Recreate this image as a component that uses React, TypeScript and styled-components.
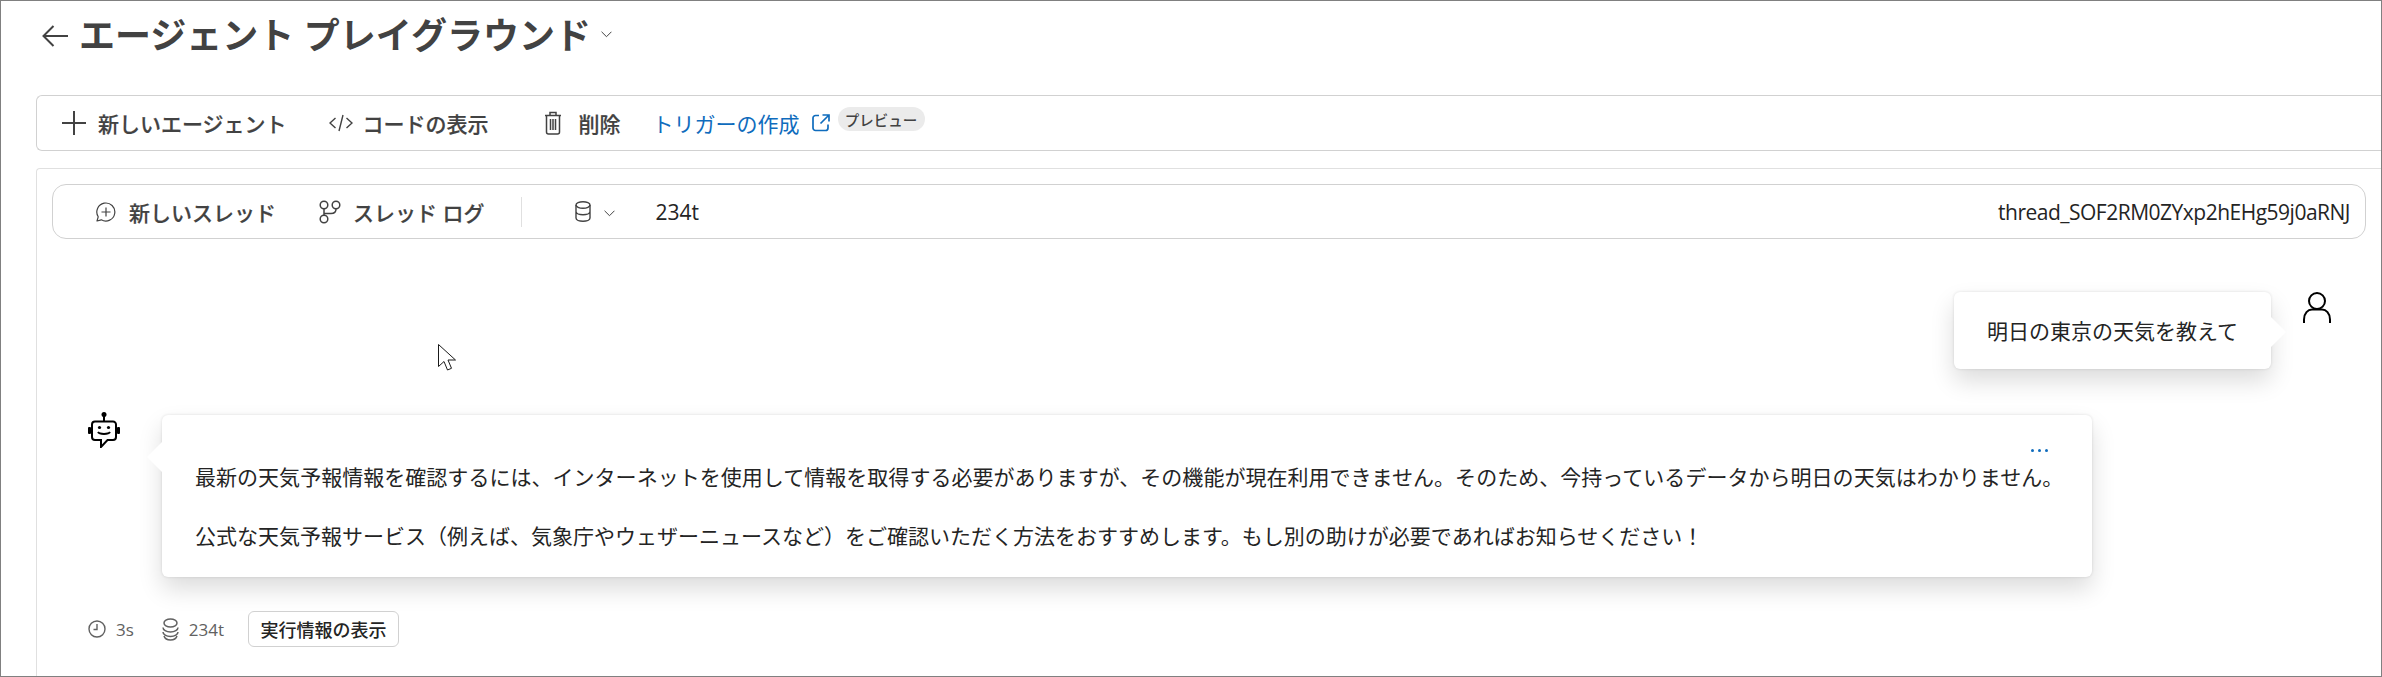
import React, { FC } from 'react'
import styled, { createGlobalStyle } from 'styled-components'

const GlobalStyle = createGlobalStyle`
  html, body {
    margin: 0;
    padding: 0;
    background: #fff;
  }
  body {
    font-family: 'Open Sans', 'Noto Sans CJK JP', sans-serif;
    color: #242424;
  }
`

const SPage = styled.div`
  position: relative;
  box-sizing: border-box;
  width: 2382px;
  height: 677px;
  overflow: hidden;
  display: flex;
  flex-direction: column;
  border: 1px solid #808080;
  background: #fff;
`

const STitleRow = styled.div`
  box-sizing: border-box;
  height: 94px;
  padding: 0 0 24px 41px;
  display: flex;
  align-items: center;
`

const STitle = styled.h1`
  margin: 0 0 0 11px;
  font-size: 36px;
  font-weight: 700;
  line-height: 44px;
  color: #424242;
  white-space: pre;
`

const STitleChevron = styled.span`
  margin: -4px 0 0 10px;
  display: flex;
`

const SToolbar = styled.div`
  box-sizing: border-box;
  height: 56px;
  margin-left: 35px;
  padding-left: 25px;
  display: flex;
  align-items: center;
  border: 1px solid #d1d1d1;
  border-right: none;
  border-radius: 6px 0 0 6px;
`

const SToolButton = styled.div<{ $gap: number; $left: number }>`
  display: flex;
  align-items: center;
  gap: ${({ $gap }) => $gap}px;
  margin-left: ${({ $left }) => $left}px;
  font-size: 21px;
  font-weight: 500;
  -webkit-text-stroke: 0.2px #424242;
  color: #424242;
  white-space: nowrap;
`

const SLink = styled.div`
  display: flex;
  align-items: center;
  gap: 12px;
  margin-left: 32px;
  font-size: 21px;
  color: #0f6cbd;
  white-space: nowrap;
`

const SBadge = styled.span`
  box-sizing: border-box;
  height: 24px;
  width: 87px;
  margin: -8px 0 0 8px;
  display: flex;
  align-items: center;
  justify-content: center;
  border-radius: 12px;
  background: #ebebeb;
  color: #424242;
  font-size: 14.5px;
  font-weight: 500;
`

const SPanel = styled.div`
  flex: 1;
  min-height: 0;
  margin: 17px 0 0 35px;
  padding: 15px 15px 0 15px;
  display: flex;
  flex-direction: column;
  border-top: 1px solid #e0e0e0;
  border-left: 1px solid #e0e0e0;
  border-top-left-radius: 4px;
`

const SThreadBar = styled.div`
  box-sizing: border-box;
  height: 55px;
  padding: 0 15px 0 43px;
  display: flex;
  align-items: center;
  border: 1px solid #d1d1d1;
  border-radius: 14px;
`

const SDivider = styled.div`
  width: 1px;
  height: 30px;
  margin-left: 37px;
  background: #e0e0e0;
`

const SDataGroup = styled.div`
  margin-left: 53px;
  display: flex;
  align-items: center;
  gap: 13px;
`

const SDataChevron = styled.span`
  margin-top: 4px;
  display: flex;
`

const STokens = styled.span`
  margin-left: 40px;
  font-size: 21px;
  font-weight: 500;
`

const SThreadId = styled.span`
  margin-left: auto;
  font-size: 21px;
  letter-spacing: -0.5px;
  color: #242424;
`

const SBubble = styled.div`
  position: relative;
  background: #fff;
  border-radius: 6px;
  box-shadow: 0 0 3px rgba(0, 0, 0, 0.12), 0 12px 24px rgba(0, 0, 0, 0.14);
`

const SArrow = styled.span<{ $side: 'left' | 'right' }>`
  position: absolute;
  width: 15px;
  height: 30px;
  background: #fff;
  ${({ $side }) =>
    $side === 'right'
      ? `right: -15px; top: 25px; clip-path: polygon(0 0, 100% 50%, 0 100%);`
      : `left: -15px; top: 27px; clip-path: polygon(100% 0, 0 50%, 100% 100%);`}
`

const SUserRow = styled.div`
  margin-top: 53px;
  padding-right: 35px;
  display: flex;
  justify-content: flex-end;
  align-items: flex-start;
  gap: 32px;
`

const SUserBubble = styled(SBubble)`
  box-sizing: border-box;
  width: 317px;
  height: 77px;
  padding: 0 0 2px 33px;
  display: flex;
  align-items: center;
  font-size: 21px;
  white-space: nowrap;
`

const SBotRow = styled.div`
  margin: 43px 0 0 36px;
  display: flex;
  align-items: flex-start;
  gap: 42px;
`

const SBotBubble = styled(SBubble)`
  box-sizing: border-box;
  width: 1930px;
  height: 162px;
  margin-top: 3px;
  padding: 24px 44px 0 33px;
`

const SDots = styled.div`
  height: 23px;
  display: flex;
  justify-content: flex-end;
  align-items: center;
  gap: 4px;
  & span {
    width: 3px;
    height: 3px;
    border-radius: 50%;
    background: #0f6cbd;
  }
`

const SParagraph = styled.p<{ $tracking: number }>`
  margin: 0 0 29px;
  font-size: 21px;
  letter-spacing: ${({ $tracking }) => $tracking}px;
  line-height: 30px;
  white-space: nowrap;
  color: #242424;
`

const SFooter = styled.div`
  margin: 34px 0 0 36px;
  display: flex;
  align-items: center;
`

const SMeta = styled.div<{ $left: number }>`
  display: flex;
  align-items: center;
  gap: 10px;
  margin-left: ${({ $left }) => $left}px;
  font-size: 17px;
  color: #616161;
`

const SRunButton = styled.button`
  box-sizing: border-box;
  width: 151px;
  height: 36px;
  margin-left: 24px;
  padding: 0;
  border: 1px solid #d1d1d1;
  border-radius: 6px;
  background: #fff;
  font-family: inherit;
  font-size: 18px;
  font-weight: 500;
  color: #242424;
`

const SCursor = styled.svg`
  position: absolute;
  left: 436px;
  top: 342px;
`

const ArrowIcon: FC = () => (
  <svg width="26" height="22" viewBox="0 0 26 22" fill="none" stroke="#424242" strokeWidth="2">
    <path d="M11.5 1 1.5 11l10 10M2 11h24" />
  </svg>
)

const Chevron: FC = () => (
  <svg width="11" height="7" viewBox="0 0 10 6" fill="none" stroke="#424242" strokeWidth="0.9">
    <path d="M.5.5 5 5 9.500.5" />
  </svg>
)

const PlusIcon: FC = () => (
  <svg width="24" height="24" viewBox="0 0 24 24" stroke="#424242" strokeWidth="2">
    <path d="M12 0v24M0 12h24" />
  </svg>
)

const CodeIcon: FC = () => (
  <svg width="24" height="20" viewBox="0 0 24 20" fill="none" stroke="#424242" strokeWidth="1.4">
    <path d="M6.500 5 1 10l5.500 5M17.500 5 23 10l-5.500 5M14 2 10 18" />
  </svg>
)

const TrashIcon: FC = () => (
  <svg width="18" height="24" viewBox="0 0 18 24" fill="none" stroke="#424242" strokeWidth="1.500">
    <path d="M1 4.500h16M6 4V1.500h6V4M2.500 4.500v16.500a2 2 0 0 0 2 2h9a2 2 0 0 0 2-2V4.500M6.500 8v11M9 8v11M11.500 8v11" />
  </svg>
)

const ExternalIcon: FC = () => (
  <svg width="18" height="18" viewBox="0 0 18 18" fill="none" stroke="#0f6cbd" strokeWidth="1.700">
    <path d="M7 1.500H3.500a2.500 2.500 0 0 0-2.500 2.500v10a2.500 2.500 0 0 0 2.500 2.500h10a2.500 2.500 0 0 0 2.500-2.500v-3.500M10.500 1h6.500v6.500M17 1 8.500 9.500" />
  </svg>
)

const AddChatIcon: FC = () => (
  <svg width="20" height="20" viewBox="0 0 20 20" fill="none" stroke="#424242" strokeWidth="1.200">
    <path d="M1 19l1.200-4.200A9 9 0 1 1 5.300 17.800z" strokeLinejoin="round" />
    <path d="M10 5.500v9M5.500 10h9" />
  </svg>
)

const BranchIcon: FC = () => (
  <svg width="22" height="24" viewBox="0 0 22 24" fill="none" stroke="#424242" strokeWidth="1.500">
    <circle cx="5" cy="5" r="3.800" />
    <circle cx="17" cy="5" r="3.800" />
    <circle cx="5" cy="19" r="3.800" />
    <path d="M5 9v6M17 9c0 3-2 4.500-5 4.500H5" />
  </svg>
)

const DatabaseIcon: FC = () => (
  <svg width="16" height="21" viewBox="0 0 16 21" fill="none" stroke="#424242" strokeWidth="1.400">
    <ellipse cx="8" cy="4" rx="7" ry="3.200" />
    <path d="M1 4v13c0 1.800 3.100 3.200 7 3.200s7-1.400 7-3.200V4M1 10.500c0 1.800 3.100 3.200 7 3.200s7-1.400 7-3.200" />
  </svg>
)

const ClockIcon: FC = () => (
  <svg width="18" height="18" viewBox="0 0 18 18" fill="none" stroke="#616161" strokeWidth="1.400">
    <circle cx="9" cy="9" r="8" />
    <path d="M9 4v5.500H5.500" />
  </svg>
)

const StackIcon: FC = () => (
  <svg width="17" height="23" viewBox="0 0 17 23" fill="none" stroke="#616161" strokeWidth="1.500">
    <ellipse cx="8.500" cy="5" rx="6.500" ry="4" />
    <path d="M1 9.500c0 2.500 3.300 4.500 7.500 4.500S16 12 16 9.500M1 14c0 2.500 3.300 4.500 7.500 4.500S16 16.500 16 14M2 18c.8 2.400 3.300 4 6.500 4s5.700-1.600 6.500-4" />
  </svg>
)

const UserIcon: FC = () => (
  <svg width="28" height="31" viewBox="0 0 28 31" fill="none" stroke="#000" strokeWidth="2">
    <circle cx="14" cy="9" r="8" />
    <path d="M1 31v-3.500C1 21 5 17.500 9 17.500h10c4 0 8 3.500 8 10V31" />
  </svg>
)

const BotIcon: FC = () => (
  <svg width="32" height="36" viewBox="0 0 32 36" fill="none">
    <circle cx="16" cy="2.500" r="2.500" fill="#000" />
    <path d="M16 3v7" stroke="#000" strokeWidth="2" />
    <path d="M7 9.500h18a3 3 0 0 1 3 3V25a3 3 0 0 1-3 3h-5.500L13 35v-7H7a3 3 0 0 1-3-3V12.500a3 3 0 0 1 3-3z" stroke="#000" strokeWidth="2" />
    <rect x="0" y="15" width="3" height="7" rx="1" fill="#000" />
    <rect x="29" y="15" width="3" height="7" rx="1" fill="#000" />
    <circle cx="11.500" cy="15.500" r="1.600" fill="#000" />
    <circle cx="20.500" cy="15.500" r="1.600" fill="#000" />
    <path d="M10 20c1.500 2.600 10.500 2.600 12 0" stroke="#000" strokeWidth="2" />
  </svg>
)

const CursorIcon: FC = () => (
  <SCursor width="20" height="29" viewBox="0 0 20 29" fill="#fff" stroke="#1a1a1a" strokeWidth="1">
    <path d="M1.500 1.500v22l5.500-5 3.500 8.500 4-1.700-3.500-8.300h7.500z" />
  </SCursor>
)

const App: FC = () => (
  <>
    <GlobalStyle />
    <SPage>
      <STitleRow>
        <ArrowIcon />
        <STitle>エージェント プレイグラウンド</STitle>
        <STitleChevron>
          <Chevron />
        </STitleChevron>
      </STitleRow>
      <SToolbar>
        <SToolButton $gap={12} $left={0}>
          <PlusIcon />
          新しいエージェント
        </SToolButton>
        <SToolButton $gap={10} $left={42}>
          <CodeIcon />
          コードの表示
        </SToolButton>
        <SToolButton $gap={17} $left={55}>
          <TrashIcon />
          削除
        </SToolButton>
        <SLink>
          トリガーの作成
          <ExternalIcon />
        </SLink>
        <SBadge>プレビュー</SBadge>
      </SToolbar>
      <SPanel>
        <SThreadBar>
          <SToolButton $gap={13} $left={0}>
            <AddChatIcon />
            新しいスレッド
          </SToolButton>
          <SToolButton $gap={12} $left={43}>
            <BranchIcon />
            スレッド ログ
          </SToolButton>
          <SDivider />
          <SDataGroup>
            <DatabaseIcon />
            <SDataChevron>
              <Chevron />
            </SDataChevron>
          </SDataGroup>
          <STokens>234t</STokens>
          <SThreadId>thread_SOF2RM0ZYxp2hEHg59j0aRNJ</SThreadId>
        </SThreadBar>
        <SUserRow>
          <SUserBubble>
            明日の東京の天気を教えて
            <SArrow $side="right" />
          </SUserBubble>
          <UserIcon />
        </SUserRow>
        <SBotRow>
          <BotIcon />
          <SBotBubble>
            <SArrow $side="left" />
            <SDots>
              <span />
              <span />
              <span />
            </SDots>
            <SParagraph $tracking={0.03}>
              最新の天気予報情報を確認するには、インターネットを使用して情報を取得する必要がありますが、その機能が現在利用できません。そのため、今持っているデータから明日の天気はわかりません。
            </SParagraph>
            <SParagraph $tracking={0}>
              公式な天気予報サービス（例えば、気象庁やウェザーニュースなど）をご確認いただく方法をおすすめします。もし別の助けが必要であればお知らせください！
            </SParagraph>
          </SBotBubble>
        </SBotRow>
        <SFooter>
          <SMeta $left={0}>
            <ClockIcon />
            3s
          </SMeta>
          <SMeta $left={28}>
            <StackIcon />
            234t
          </SMeta>
          <SRunButton>実行情報の表示</SRunButton>
        </SFooter>
      </SPanel>
      <CursorIcon />
    </SPage>
  </>
)

export default App
